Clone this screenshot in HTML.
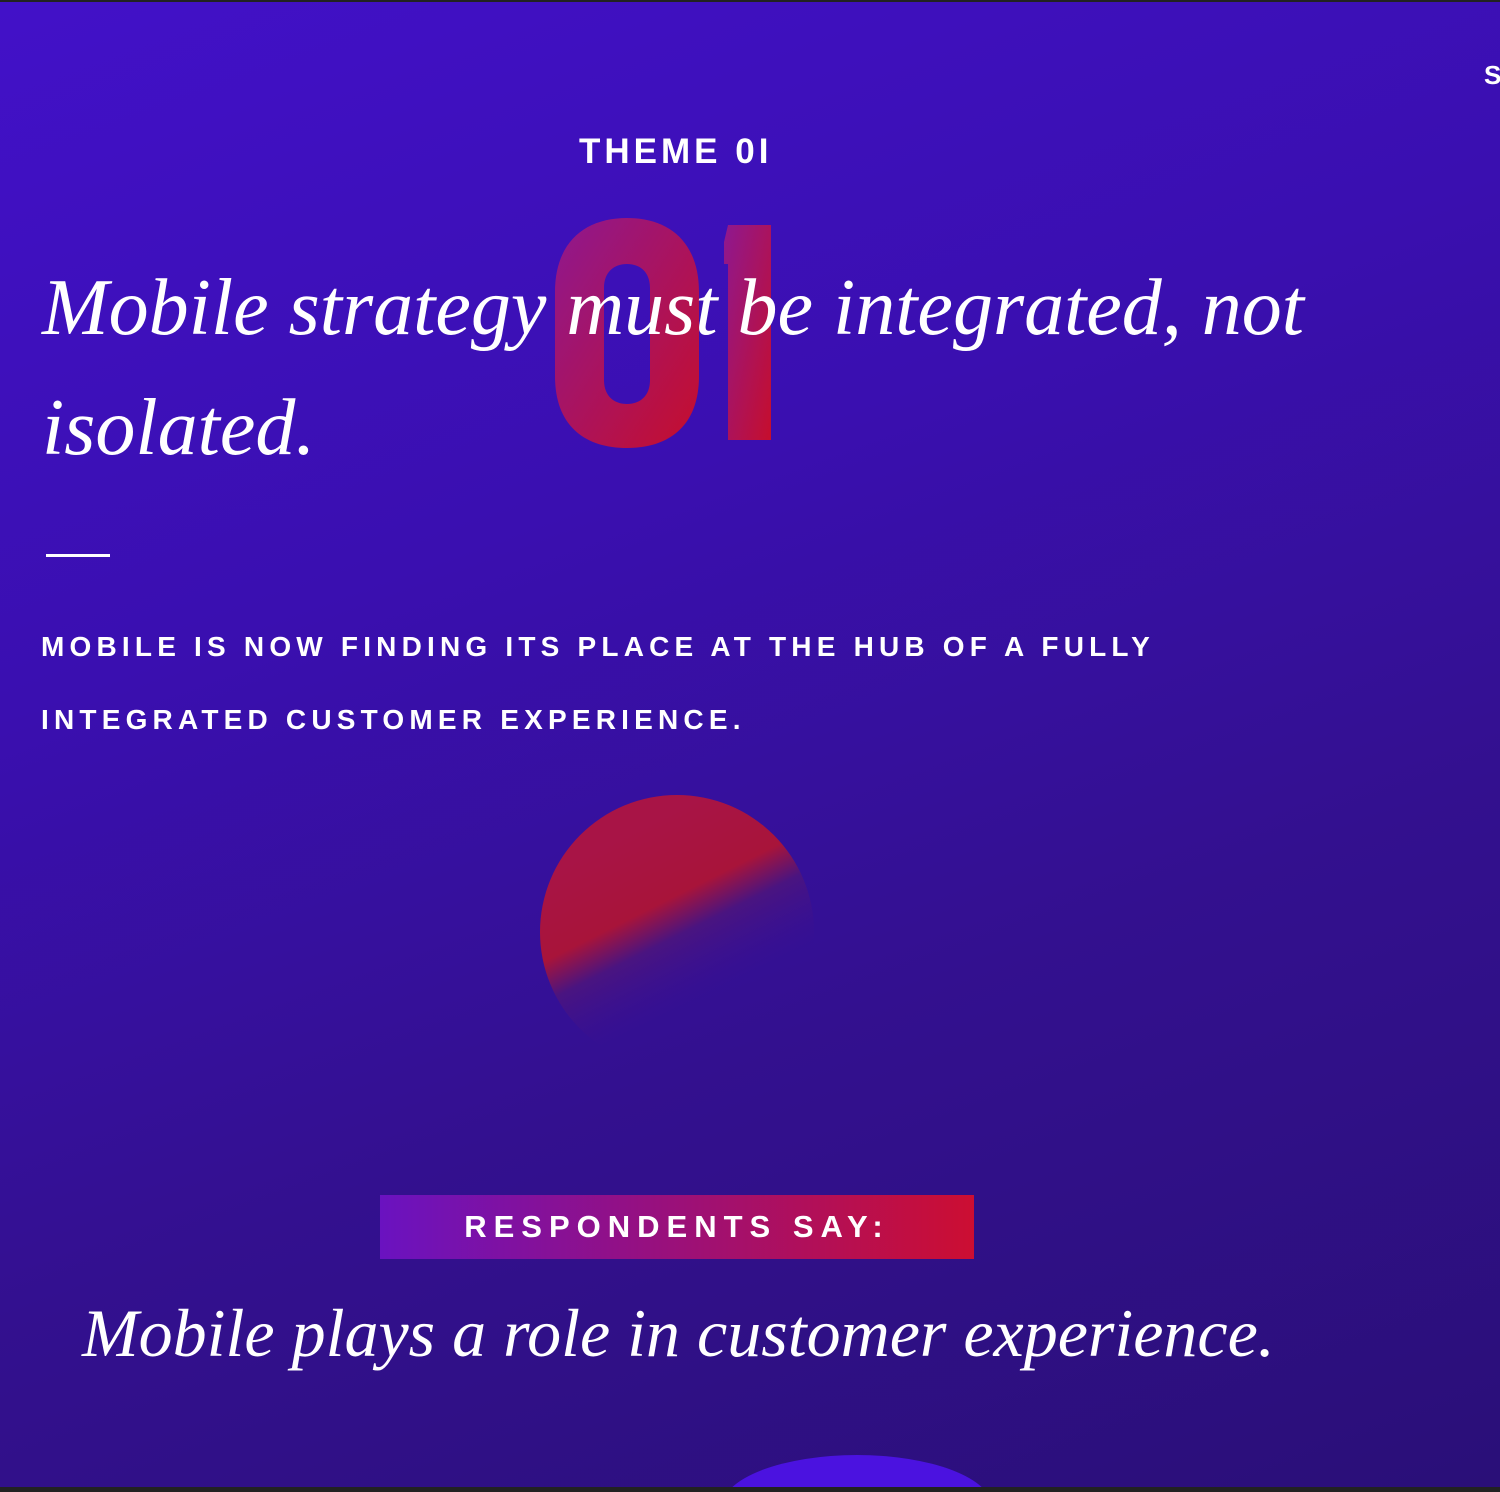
<!DOCTYPE html>
<html><head><style>
html,body{margin:0;padding:0;}
body{width:1500px;height:1492px;overflow:hidden;position:relative;background:#222;}
#bg{position:absolute;left:0;top:2px;width:1500px;height:1485px;overflow:hidden;background:linear-gradient(160deg,#4211c8 0%,#3a0fb0 35%,#33108f 65%,#2a0f78 100%);}
.t{position:absolute;color:#fff;white-space:nowrap;}
.serif{font-family:"Liberation Serif",serif;font-style:italic;}
.caps{font-family:"Liberation Sans",sans-serif;font-weight:bold;}
</style></head><body>
<div id="bg">
<svg style="position:absolute;left:0;top:0" width="1500" height="1485">
<defs>
<linearGradient id="g01" x1="0" y1="0" x2="1" y2="1"><stop offset="0" stop-color="#8e1890"/><stop offset="1" stop-color="#c60e2c"/></linearGradient>
<linearGradient id="gs" x1="0.3" y1="0.15" x2="0.6" y2="0.75"><stop offset="0" stop-color="#a81446"/><stop offset="0.42" stop-color="#a8143a"/><stop offset="0.62" stop-color="#4a1480"/><stop offset="1" stop-color="#3a1090" stop-opacity="0"/></linearGradient>
</defs>
<path fill="url(#g01)" fill-rule="evenodd" d="M627 216 C585 216 555 240 555 290 L555 374 C555 424 585 446 627 446 C669 446 699 424 699 374 L699 290 C699 240 669 216 627 216 Z M627 262 C614 262 604 270 604 286 L604 378 C604 394 614 402 627 402 C640 402 650 394 650 378 L650 286 C650 270 640 262 627 262 Z"/>
<path fill="url(#g01)" d="M728 223 L771 223 L771 438 L728 438 L728 262 L724 262 L724 240 Z"/>
<circle cx="677" cy="930" r="137" fill="url(#gs)"/>
<ellipse cx="857" cy="1505" rx="135" ry="52" fill="#4b12e0"/>
</svg>
<div class="t caps" style="left:579px;top:130px;font-size:35px;letter-spacing:4px;font-family:'Liberation Sans Narrow','Liberation Sans',sans-serif;">THEME 0I</div>
<div class="t caps" style="left:1484px;top:58px;font-size:26px;">S</div>
<div class="t serif" style="left:42px;top:246px;font-size:80px;line-height:120px;">Mobile strategy must be integrated, not<br>isolated.</div>
<div style="position:absolute;left:46px;top:552px;width:64px;height:3px;background:#fff;"></div>
<div class="t caps" style="left:41px;top:608px;font-size:28px;line-height:73px;letter-spacing:5.2px;">MOBILE IS NOW FINDING ITS PLACE AT THE HUB OF A FULLY<br>INTEGRATED CUSTOMER EXPERIENCE.</div>
<div style="position:absolute;left:380px;top:1193px;width:594px;height:64px;background:linear-gradient(90deg,#6a12c0,#cc0e32);"></div>
<div class="t caps" style="left:380px;top:1193px;width:594px;text-align:center;line-height:64px;font-size:31px;letter-spacing:7px;">RESPONDENTS SAY:</div>
<div class="t serif" style="left:82px;top:1292px;font-size:68px;">Mobile plays a role in customer experience.</div>
</div>
</body></html>
